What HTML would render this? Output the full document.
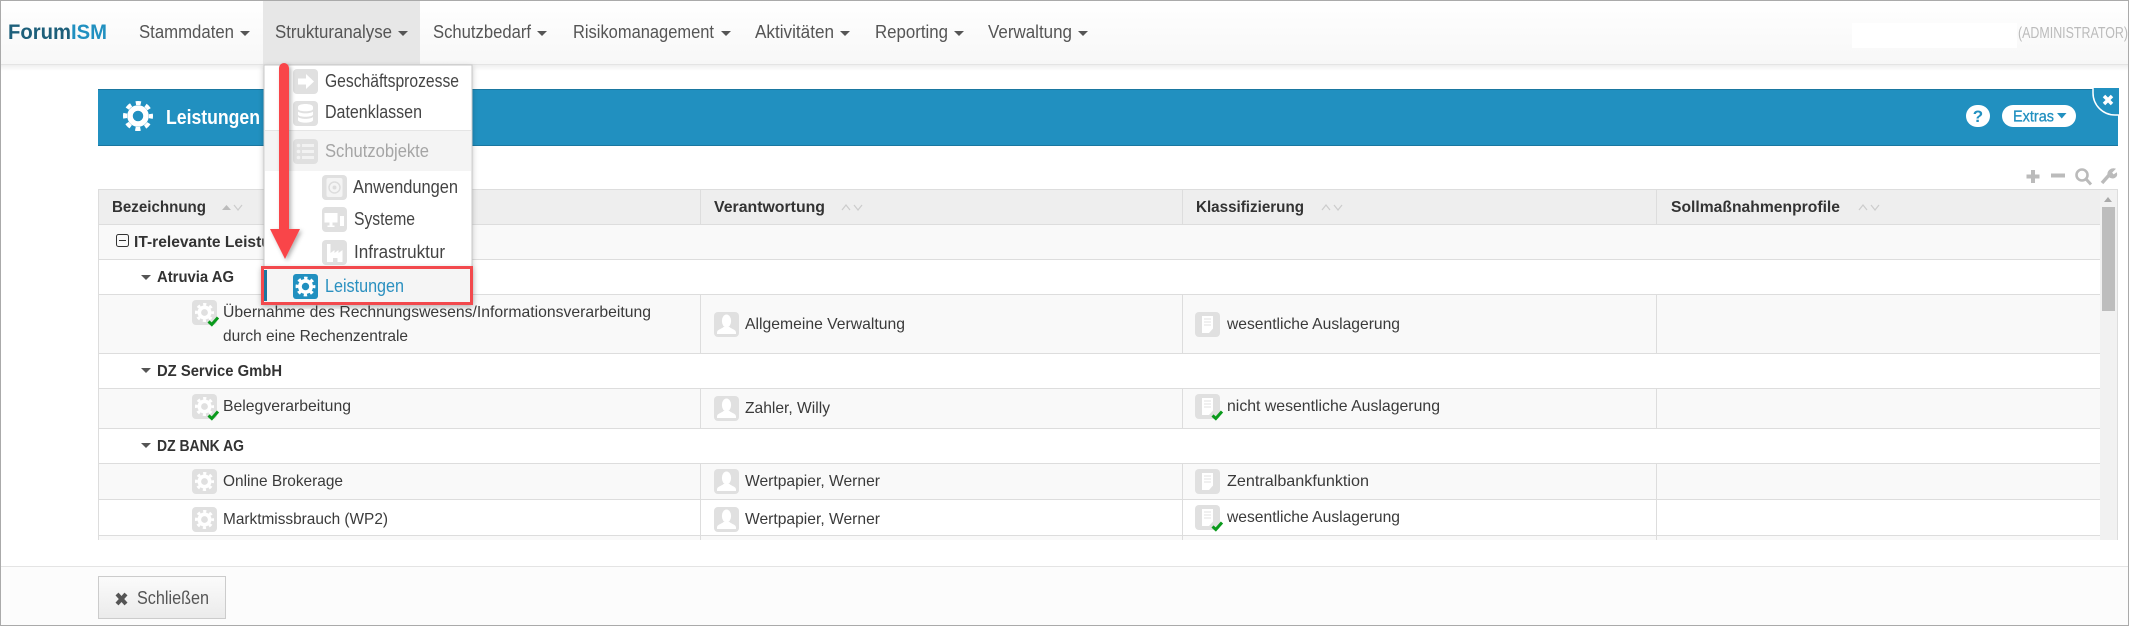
<!DOCTYPE html>
<html lang="de"><head><meta charset="utf-8"><title>ForumISM</title>
<style>
html,body{margin:0;padding:0;background:#fff}
svg{display:block}
text{font-family:"Liberation Sans",sans-serif;white-space:pre}
.n{font-size:18px;fill:#555}
.t{font-size:16px;fill:#3a3a3a}
.b{font-size:16px;font-weight:bold;fill:#333}
.m{font-size:18px;fill:#444}
</style></head><body>
<svg xmlns="http://www.w3.org/2000/svg" width="2129" height="626" viewBox="0 0 2129 626">
<defs>
<linearGradient id="nav" x1="0" y1="0" x2="0" y2="1"><stop offset="0" stop-color="#fff"/><stop offset="1" stop-color="#f7f7f7"/></linearGradient>
<linearGradient id="sh" x1="0" y1="0" x2="0" y2="1"><stop offset="0" stop-color="#efefef"/><stop offset="1" stop-color="#fff"/></linearGradient>
<linearGradient id="btn" x1="0" y1="0" x2="0" y2="1"><stop offset="0" stop-color="#fbfbfb"/><stop offset="1" stop-color="#ebebeb"/></linearGradient>
<filter id="ds" x="-10%" y="-10%" width="125%" height="125%"><feDropShadow dx="0" dy="2" stdDeviation="3" flood-color="#000" flood-opacity=".22"/></filter>
<filter id="ds2" x="-30%" y="-10%" width="170%" height="125%"><feDropShadow dx="2" dy="2" stdDeviation="2" flood-color="#000" flood-opacity=".3"/></filter>
<g id="gear"><rect width="25" height="25" rx="4" fill="#e0e0e0"/><circle cx="12.5" cy="12.5" r="5.2" fill="none" stroke="#fff" stroke-width="3.6"/><circle cx="12.5" cy="12.5" r="8.2" fill="none" stroke="#fff" stroke-width="2.6" stroke-dasharray="3.2 3.24" stroke-dashoffset="1.6"/></g>
<g id="gearB"><rect width="25" height="25" rx="3" fill="#2190c0"/><circle cx="12.5" cy="12.5" r="5.6" fill="none" stroke="#fff" stroke-width="3.8"/><circle cx="12.5" cy="12.5" r="8.5" fill="none" stroke="#fff" stroke-width="2.8" stroke-dasharray="3.4 3.28" stroke-dashoffset="1.7"/></g>
<g id="person"><rect width="25" height="25" rx="4" fill="#e0e0e0"/><ellipse cx="12.5" cy="9" rx="4.6" ry="6.5" fill="#fff"/><path d="M3 22v-1.5c0-3 4.500-3.500 6.500-5.500h6c2 2 6.500 2.500 6.500 5.500V22z" fill="#fff"/></g>
<g id="doc"><rect width="25" height="25" rx="4" fill="#e0e0e0"/><path d="M7 4h11v12.500l-4 4.500H7z" fill="#fff"/><path d="M9 7h7M9 10h7M9 13h7" stroke="#ececec" stroke-width="1.500"/></g>
<path id="chk" d="M16.500 21.500l3.300 3 6.200-7" fill="none" stroke="#0a9a1c" stroke-width="3"/>
<g id="arrowI"><rect width="25" height="25" rx="4" fill="#e0e0e0"/><path d="M5 9.500h8V5l8 7.500-8 7.500v-4.500H5z" fill="#fff"/></g>
<g id="dbI"><rect width="25" height="25" rx="4" fill="#e0e0e0"/><path d="M5 6c0-4 15-4 15 0v2c0 3-15 3-15 0zM5 10.500c3 2.500 12 2.500 15 0v3c0 3-15 3-15 0zM5 16c3 2.500 12 2.500 15 0v3c0 3.500-15 3.500-15 0z" fill="#fff"/></g>
<g id="listI"><rect width="25" height="25" rx="4" fill="#e0e0e0"/><path d="M9 5h12v3H9zM9 11h12v3H9zM9 17h12v3H9z" fill="#f2f2f2"/><circle cx="5.500" cy="6.500" r="1.800" fill="#f2f2f2"/><circle cx="5.500" cy="12.500" r="1.800" fill="#f2f2f2"/><circle cx="5.500" cy="18.500" r="1.800" fill="#f2f2f2"/></g>
<g id="discI"><rect width="25" height="25" rx="4" fill="#e0e0e0"/><rect x="4.500" y="3" width="16" height="19" rx="2" fill="#f4f4f4"/><circle cx="12.500" cy="12.500" r="5.500" fill="none" stroke="#ddd" stroke-width="1.500"/><circle cx="12.500" cy="12.500" r="2" fill="#ddd"/></g>
<g id="sysI"><rect width="25" height="25" rx="4" fill="#e0e0e0"/><rect x="2.500" y="6" width="13" height="9.500" fill="#fff"/><path d="M7.500 15.500h3v3h2v1.500H5.500v-1.500h2z" fill="#fff"/><rect x="18" y="9" width="4" height="10" fill="#fff"/></g>
<g id="facI"><rect width="25" height="25" rx="4" fill="#e0e0e0"/><path d="M5 22V4h3.500v9l4-3v3l4-3v3l4-3v12h-5v-4h-4.500v4z" fill="#fff"/></g>
<path id="car" d="M0 0h10l-5 5z" fill="#555"/>
<g id="sort"><path d="M0 6l4-5 4 5" fill="none" stroke="#ccc" stroke-width="1.200"/><path d="M12 1l4 5 4-5" fill="none" stroke="#ccc" stroke-width="1.200"/></g>
</defs>

<rect width="2129" height="626" fill="#fff"/>

<!-- nav -->
<rect x="0" y="0" width="2129" height="64" fill="url(#nav)"/>
<rect x="0" y="64" width="2129" height="1" fill="#e4e4e4"/>
<rect x="0" y="65" width="2129" height="6" fill="url(#sh)"/>
<rect x="263" y="1" width="157" height="63" fill="#e7e7e7"/>
<text x="8" y="39" font-size="21" font-weight="bold" textLength="99" lengthAdjust="spacingAndGlyphs"><tspan fill="#1d5f7a">Forum</tspan><tspan fill="#2190c0">ISM</tspan></text>
<text class="n" x="139" y="38" textLength="95" lengthAdjust="spacingAndGlyphs">Stammdaten</text><use href="#car" x="240" y="31"/>
<text class="n" x="275" y="38" textLength="117" lengthAdjust="spacingAndGlyphs">Strukturanalyse</text><use href="#car" x="398" y="31"/>
<text class="n" x="433" y="38" textLength="98" lengthAdjust="spacingAndGlyphs">Schutzbedarf</text><use href="#car" x="537" y="31"/>
<text class="n" x="573" y="38" textLength="141" lengthAdjust="spacingAndGlyphs">Risikomanagement</text><use href="#car" x="721" y="31"/>
<text class="n" x="755" y="38" textLength="79" lengthAdjust="spacingAndGlyphs">Aktivitäten</text><use href="#car" x="840" y="31"/>
<text class="n" x="875" y="38" textLength="73" lengthAdjust="spacingAndGlyphs">Reporting</text><use href="#car" x="954" y="31"/>
<text class="n" x="988" y="38" textLength="84" lengthAdjust="spacingAndGlyphs">Verwaltung</text><use href="#car" x="1078" y="31"/>
<rect x="1852" y="23" width="165" height="25" fill="#fff"/>
<text x="2018" y="38" font-size="16" fill="#bbb" textLength="110" lengthAdjust="spacingAndGlyphs">(ADMINISTRATOR)</text>

<!-- banner -->
<rect x="98" y="89" width="2020" height="57" fill="#2190c0"/>
<rect x="98" y="89" width="2020" height="1" fill="#1a77a0"/>
<rect x="98" y="145" width="2020" height="1" fill="#1a77a0"/>
<g transform="translate(138 116)"><circle r="8" fill="none" stroke="#fff" stroke-width="5.500"/><circle r="13" fill="none" stroke="#fff" stroke-width="4" stroke-dasharray="5.200 5" stroke-dashoffset="2.600"/></g>
<text x="166" y="124" font-size="20" font-weight="bold" fill="#fff" textLength="94" lengthAdjust="spacingAndGlyphs">Leistungen</text>
<rect x="1966" y="105" width="24" height="22" rx="11" fill="#fff"/>
<text x="1978" y="122" font-size="17" font-weight="bold" fill="#2190c0" text-anchor="middle">?</text>
<rect x="2002" y="105" width="74" height="22" rx="11" fill="#fff"/>
<text x="2013" y="121.500" font-size="16" fill="#2190c0" stroke="#2190c0" stroke-width=".3" textLength="41" lengthAdjust="spacingAndGlyphs">Extras</text>
<path d="M2057 113h9.500l-4.750 5.500z" fill="#2190c0"/>
<rect x="2119" y="86" width="10" height="32" fill="#fff"/>
<path d="M2093 88v5a22 22 0 0 0 22 22h4v-27z" fill="#2190c0"/>
<path d="M2093 88v5a22 22 0 0 0 22 22h4" fill="none" stroke="#fff" stroke-width="1.500"/>
<path d="M2104 96l8 8M2112 96l-8 8" stroke="#fff" stroke-width="3.500"/>

<!-- toolbar -->
<path d="M2033 170v13M2026.500 176.500h13" stroke="#bbb" stroke-width="4"/>
<path d="M2051 175.500h14" stroke="#bbb" stroke-width="4"/>
<circle cx="2082" cy="175" r="5.500" fill="none" stroke="#bbb" stroke-width="2.600"/><path d="M2086 179l5 5.500" stroke="#bbb" stroke-width="3"/>
<path d="M2102 183l8-9" stroke="#bbb" stroke-width="3.500"/><path d="M2108 176c-1-5 3-8 7-7l-3.500 3.500 2 2.500 3-2c1 4-3.500 7-8.500 3z" fill="#bbb" stroke="#bbb"/>

<!-- table -->
<rect x="98" y="189" width="2020" height="351" fill="#fff"/>
<rect x="98" y="189" width="2020" height="36" fill="#eee"/>
<rect x="98" y="225" width="2002" height="34" fill="#f9f9f9"/>
<rect x="98" y="295" width="2002" height="58" fill="#f9f9f9"/>
<rect x="98" y="389" width="2002" height="39" fill="#f9f9f9"/>
<rect x="98" y="464" width="2002" height="35" fill="#f9f9f9"/>
<rect x="98" y="536" width="2002" height="4" fill="#f9f9f9"/>
<g fill="#ddd">
<rect x="98" y="189" width="2020" height="1"/>
<rect x="98" y="224" width="2002" height="1"/>
<rect x="98" y="259" width="2002" height="1"/>
<rect x="98" y="294" width="2002" height="1"/>
<rect x="98" y="353" width="2002" height="1"/>
<rect x="98" y="388" width="2002" height="1"/>
<rect x="98" y="428" width="2002" height="1"/>
<rect x="98" y="463" width="2002" height="1"/>
<rect x="98" y="499" width="2002" height="1"/>
<rect x="98" y="535" width="2002" height="1"/>
<rect x="98" y="189" width="1" height="351"/>
<rect x="2117" y="189" width="1" height="351"/>
<rect x="700" y="189" width="1" height="36"/><rect x="1182" y="189" width="1" height="36"/><rect x="1656" y="189" width="1" height="36"/>
<rect x="700" y="295" width="1" height="58"/><rect x="1182" y="295" width="1" height="58"/><rect x="1656" y="295" width="1" height="58"/>
<rect x="700" y="389" width="1" height="39"/><rect x="1182" y="389" width="1" height="39"/><rect x="1656" y="389" width="1" height="39"/>
<rect x="700" y="464" width="1" height="76"/><rect x="1182" y="464" width="1" height="76"/><rect x="1656" y="464" width="1" height="76"/>
</g>
<!-- scrollbar -->
<rect x="2100" y="190" width="17" height="350" fill="#f1f1f1"/>
<path d="M2104 202l4-5 4 5z" fill="#aaa"/>
<rect x="2102" y="207" width="13" height="104" fill="#bdbdbd"/>

<!-- header -->
<text class="b" x="112" y="212" textLength="94" lengthAdjust="spacingAndGlyphs">Bezeichnung</text>
<path d="M222 210l4.500-5 4.500 5z" fill="#bbb"/><path d="M234 205l4 5 4-5" fill="none" stroke="#ccc" stroke-width="1.200"/>
<text class="b" x="714" y="212" textLength="111" lengthAdjust="spacingAndGlyphs">Verantwortung</text><use href="#sort" x="842" y="204"/>
<text class="b" x="1196" y="212" textLength="108" lengthAdjust="spacingAndGlyphs">Klassifizierung</text><use href="#sort" x="1322" y="204"/>
<text class="b" x="1671" y="212" textLength="169" lengthAdjust="spacingAndGlyphs">Sollmaßnahmenprofile</text><use href="#sort" x="1859" y="204"/>

<!-- rows -->
<rect x="116.500" y="234.500" width="12" height="12" rx="2" fill="none" stroke="#333" stroke-width="1"/><path d="M119 240.500h7" stroke="#333"/>
<text class="b" x="134" y="247" textLength="174" lengthAdjust="spacingAndGlyphs">IT-relevante Leistungen</text>
<use href="#car" x="141" y="275"/>
<text class="b" x="157" y="282" textLength="77" lengthAdjust="spacingAndGlyphs">Atruvia AG</text>
<use href="#gear" x="192" y="300"/><use href="#chk" x="192" y="300"/>
<text class="t" x="223" y="317" textLength="428" lengthAdjust="spacingAndGlyphs">Übernahme des Rechnungswesens/Informationsverarbeitung</text>
<text class="t" x="223" y="341" textLength="185" lengthAdjust="spacingAndGlyphs">durch eine Rechenzentrale</text>
<use href="#person" x="714" y="312"/>
<text class="t" x="745" y="329" textLength="160" lengthAdjust="spacingAndGlyphs">Allgemeine Verwaltung</text>
<use href="#doc" x="1195" y="312"/>
<text class="t" x="1227" y="329" textLength="173" lengthAdjust="spacingAndGlyphs">wesentliche Auslagerung</text>

<use href="#car" x="141" y="368"/>
<text class="b" x="157" y="376" textLength="125" lengthAdjust="spacingAndGlyphs">DZ Service GmbH</text>
<use href="#gear" x="192" y="394"/><use href="#chk" x="192" y="394"/>
<text class="t" x="223" y="411" textLength="128" lengthAdjust="spacingAndGlyphs">Belegverarbeitung</text>
<use href="#person" x="714" y="396"/>
<text class="t" x="745" y="413" textLength="85" lengthAdjust="spacingAndGlyphs">Zahler, Willy</text>
<use href="#doc" x="1195" y="394"/><use href="#chk" x="1196" y="394"/>
<text class="t" x="1227" y="411" textLength="213" lengthAdjust="spacingAndGlyphs">nicht wesentliche Auslagerung</text>

<use href="#car" x="141" y="443"/>
<text class="b" x="157" y="451" textLength="87" lengthAdjust="spacingAndGlyphs">DZ BANK AG</text>
<use href="#gear" x="192" y="469"/>
<text class="t" x="223" y="486" textLength="120" lengthAdjust="spacingAndGlyphs">Online Brokerage</text>
<use href="#person" x="714" y="469"/>
<text class="t" x="745" y="486" textLength="135" lengthAdjust="spacingAndGlyphs">Wertpapier, Werner</text>
<use href="#doc" x="1195" y="469"/>
<text class="t" x="1227" y="486" textLength="142" lengthAdjust="spacingAndGlyphs">Zentralbankfunktion</text>

<use href="#gear" x="192" y="507"/>
<text class="t" x="223" y="524" textLength="165" lengthAdjust="spacingAndGlyphs">Marktmissbrauch (WP2)</text>
<use href="#person" x="714" y="507"/>
<text class="t" x="745" y="524" textLength="135" lengthAdjust="spacingAndGlyphs">Wertpapier, Werner</text>
<use href="#doc" x="1195" y="505"/><use href="#chk" x="1196" y="505"/>
<text class="t" x="1227" y="522" textLength="173" lengthAdjust="spacingAndGlyphs">wesentliche Auslagerung</text>

<!-- footer -->
<rect x="0" y="566" width="2129" height="60" fill="#fcfcfc"/>
<rect x="0" y="566" width="2129" height="1" fill="#e4e4e4"/>
<rect x="98.500" y="576.500" width="127" height="42" fill="url(#btn)" stroke="#ccc"/>
<path d="M117 594l9 10M126 594l-9 10" stroke="#555" stroke-width="4"/>
<text x="137" y="604" font-size="18" fill="#555" textLength="72" lengthAdjust="spacingAndGlyphs">Schließen</text>

<!-- dropdown -->
<rect x="264" y="65" width="208" height="236" fill="#fff" stroke="#c8c8c8" filter="url(#ds)"/>
<rect x="265" y="130" width="206" height="1" fill="#e5e5e5"/>
<rect x="265" y="131" width="206" height="40" fill="#f4f4f4"/>
<use href="#arrowI" x="293" y="69"/>
<text class="m" x="325" y="87" textLength="134" lengthAdjust="spacingAndGlyphs">Geschäftsprozesse</text>
<use href="#dbI" x="293" y="101"/>
<text class="m" x="325" y="118" textLength="97" lengthAdjust="spacingAndGlyphs">Datenklassen</text>
<use href="#listI" x="293" y="139"/>
<text class="m" x="325" y="157" textLength="104" lengthAdjust="spacingAndGlyphs" style="fill:#a5a5a5">Schutzobjekte</text>
<use href="#discI" x="322" y="175"/>
<text class="m" x="353" y="193" textLength="105" lengthAdjust="spacingAndGlyphs">Anwendungen</text>
<use href="#sysI" x="322" y="207"/>
<text class="m" x="354" y="225" textLength="61" lengthAdjust="spacingAndGlyphs">Systeme</text>
<use href="#facI" x="322" y="240"/>
<text class="m" x="354" y="258" textLength="91" lengthAdjust="spacingAndGlyphs">Infrastruktur</text>

<!-- highlighted item -->
<rect x="262.500" y="267.500" width="209" height="36" fill="#f5f5f5" stroke="#f24a4d" stroke-width="3" filter="url(#ds)"/>
<rect x="264" y="270" width="3" height="31" fill="#1a77a0"/>
<use href="#gearB" x="293" y="274"/>
<text x="325" y="292" font-size="18" fill="#2a90c0" textLength="79" lengthAdjust="spacingAndGlyphs">Leistungen</text>

<!-- red arrow -->
<path d="M279 68a5 5 0 0 1 10 0V229h11l-15 30-15-30h9z" fill="#f9444a" filter="url(#ds2)"/>
<rect x="0" y="0" width="2129" height="1" fill="#aaa"/>
<rect x="0" y="0" width="1" height="626" fill="#aaa"/>
<rect x="2128" y="0" width="1" height="626" fill="#aaa"/>
<rect x="0" y="625" width="2129" height="1" fill="#aaa"/>
</svg>
</body></html>
